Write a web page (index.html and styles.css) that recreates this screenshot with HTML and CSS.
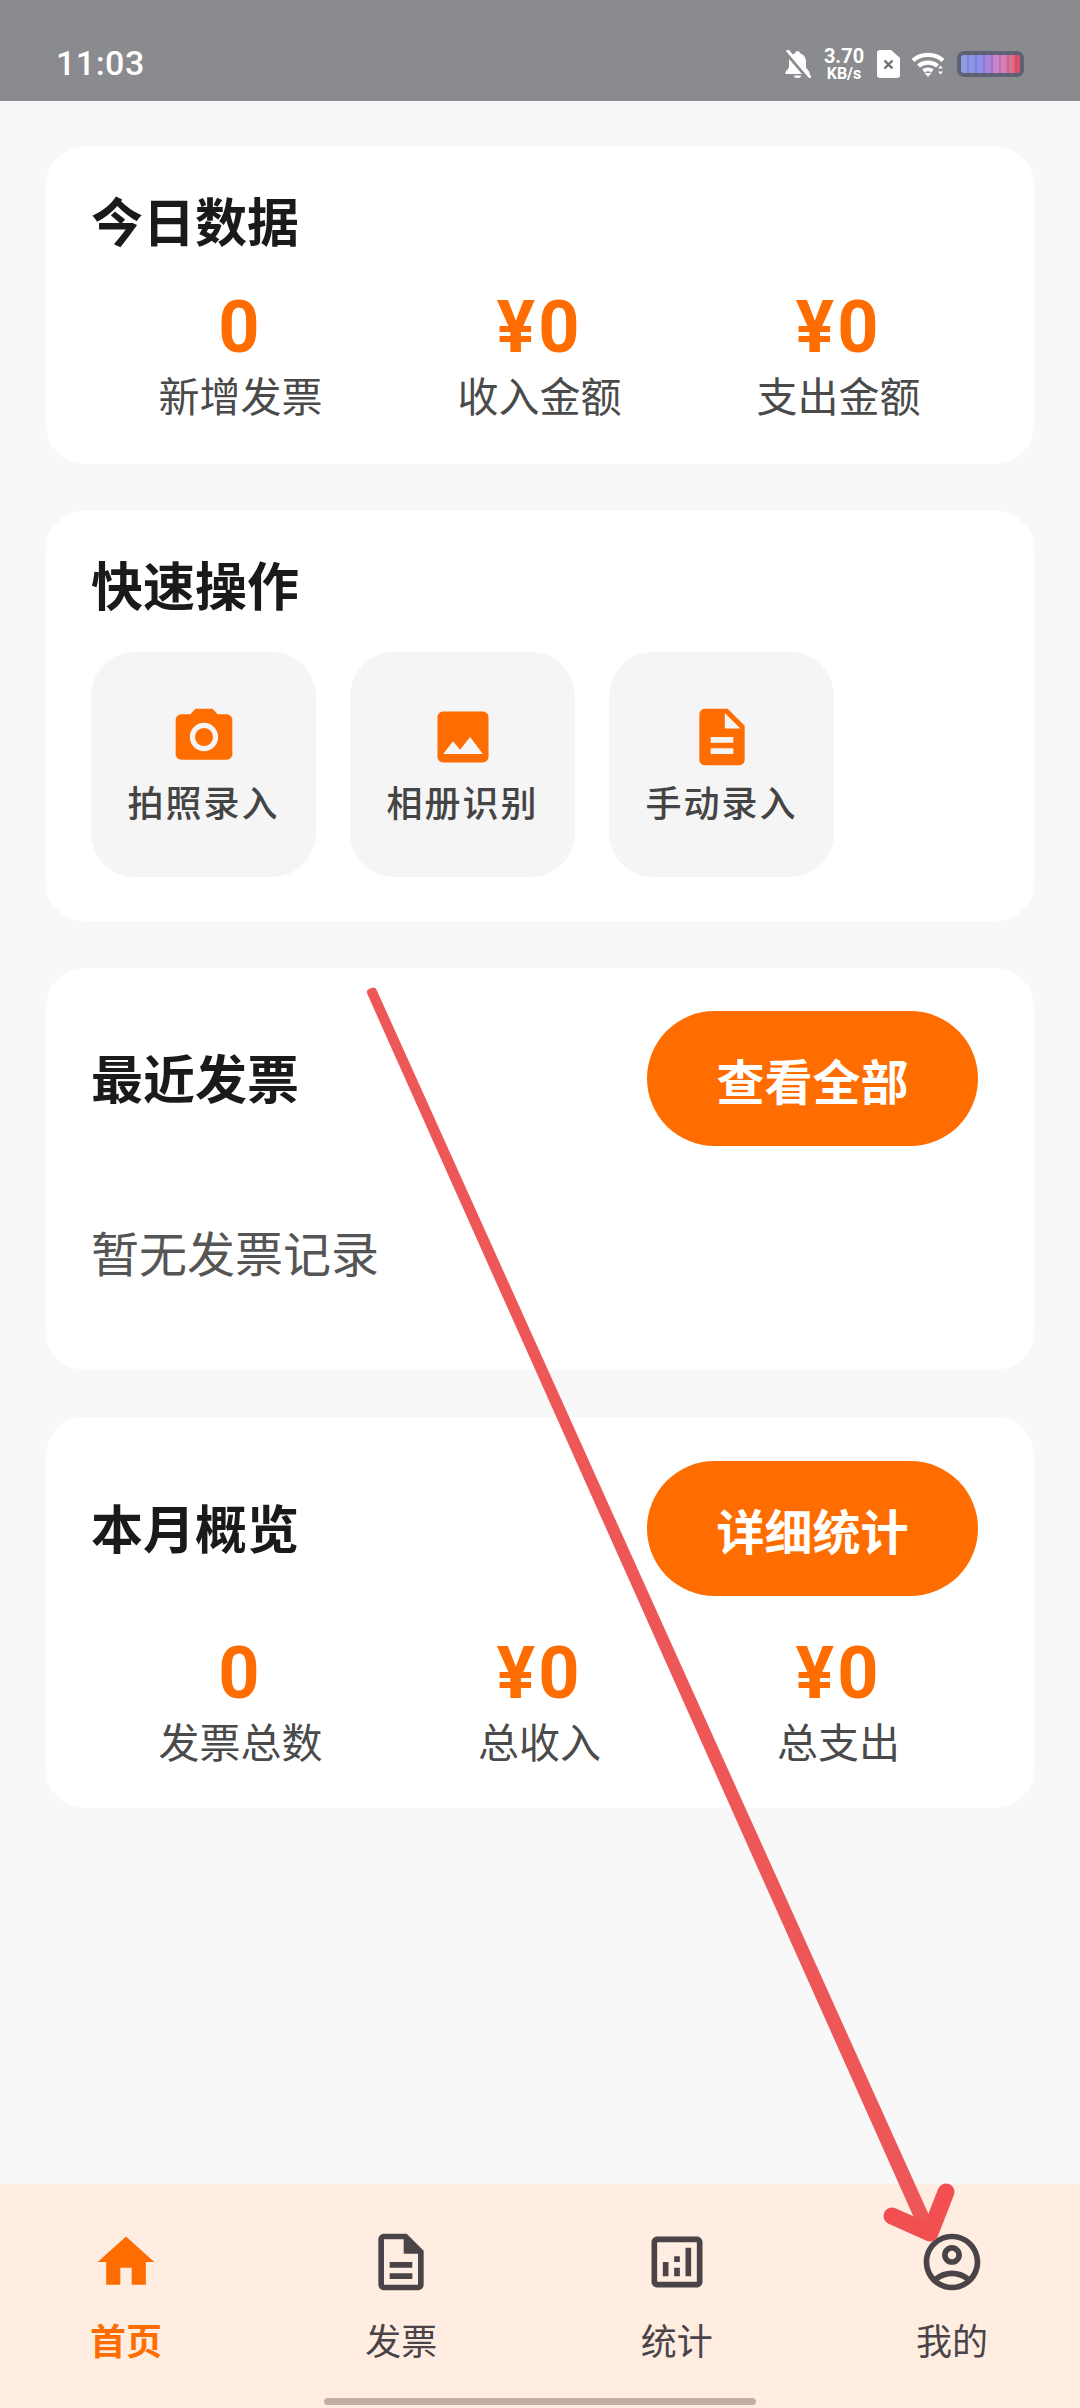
FILE: index.html
```html
<!DOCTYPE html>
<html lang="zh-CN">

<head>
    <meta charset="UTF-8">
    <meta name="viewport" content="width=device-width, initial-scale=1.0">
    <title>发票管理</title>
    <link rel="stylesheet" href="styles.css">
</head>

<body>
    <!-- Status bar -->
    <div class="statusbar">
        <span class="clock">11:03</span>
        <div class="status-icons">
            <svg class="ic-bell" viewBox="0 0 27 28"><path d="M13.500 1c-1.400 0-2.400 1-2.500 2.300C7.400 4.300 5 7.600 5 11.500v6L1.500 22v2h24v-2L22 17.500v-6c0-3.900-2.400-7.200-6-8.200C15.900 2 14.900 1 13.500 1zM10 25.500a3.500 2.500 0 0 0 7 0z" fill="#fff"/><path d="M1 0l24 28" stroke="#8a8b8e" stroke-width="5.500"/><path d="M3 0l24 28" stroke="#fff" stroke-width="3"/></svg>
            <div class="speed"><span class="speed-num">3.70</span><span class="speed-unit">KB/s</span></div>
            <svg class="ic-sim" viewBox="0 0 23 28"><path d="M3 0h11l9 8v17a3 3 0 0 1-3 3H3a3 3 0 0 1-3-3V3a3 3 0 0 1 3-3z" fill="#fff"/><path d="M7.500 10.500l8 8m0-8l-8 8" stroke="#6f7074" stroke-width="2.400"/></svg>
            <svg class="ic-wifi" viewBox="0 0 35 26" fill="none" stroke="#fff" stroke-width="4.200"><path d="M2 9.500c8-7.500 22-7.500 30 0"/><path d="M7.500 15c5-4.500 14-4.500 19 0"/><path d="M12.500 20c2.500-2 6.500-2 9 0"/><path d="M13.500 22l3.500 4 3.500-4z" fill="#fff" stroke="none"/><path d="M27 17.500l2.500-3 2.500 3zM27 20.500l2.500 3 2.500-3z" fill="#fff" stroke="none"/></svg>
            <div class="battery"><div class="battery-fill"></div></div>
        </div>
    </div>

    <div class="content">
        <!-- 今日数据 -->
        <section class="card card-today">
            <h2 class="card-title">今日数据</h2>
            <div class="stats">
                <div class="stat"><div class="stat-value">0</div><div class="stat-label">新增发票</div></div>
                <div class="stat"><div class="stat-value">¥0</div><div class="stat-label">收入金额</div></div>
                <div class="stat"><div class="stat-value">¥0</div><div class="stat-label">支出金额</div></div>
            </div>
        </section>

        <!-- 快速操作 -->
        <section class="card card-quick">
            <h2 class="card-title">快速操作</h2>
            <div class="tiles">
                <div class="tile">
                    <svg class="tile-icon" viewBox="0 0 24 24"><circle cx="12" cy="12" r="3.200"/><path d="M9 2L7.170 4H4c-1.100 0-2 .9-2 2v12c0 1.100.9 2 2 2h16c1.100 0 2-.9 2-2V6c0-1.100-.9-2-2-2h-3.170L15 2H9zm3 15c-2.760 0-5-2.240-5-5s2.240-5 5-5 5 2.240 5 5-2.240 5-5 5z"/></svg>
                    <span class="tile-label">拍照录入</span>
                </div>
                <div class="tile">
                    <svg class="tile-icon" viewBox="0 0 24 24"><path d="M21 19V5c0-1.100-.9-2-2-2H5c-1.100 0-2 .9-2 2v14c0 1.100.9 2 2 2h14c1.100 0 2-.9 2-2zM8.500 13.500l2.500 3.010L14.500 12l4.500 6H5l3.500-4.500z"/></svg>
                    <span class="tile-label">相册识别</span>
                </div>
                <div class="tile">
                    <svg class="tile-icon" viewBox="0 0 24 24"><path d="M14 2H6c-1.100 0-1.990.9-1.990 2L4 20c0 1.100.89 2 1.990 2H18c1.100 0 2-.9 2-2V8l-6-6zm2 16H8v-2h8v2zm0-4H8v-2h8v2zm-3-5V3.500L18.500 9H13z"/></svg>
                    <span class="tile-label">手动录入</span>
                </div>
            </div>
        </section>

        <!-- 最近发票 -->
        <section class="card card-recent">
            <div class="card-head">
                <h2 class="card-title">最近发票</h2>
                <button class="pill">查看全部</button>
            </div>
            <p class="empty">暂无发票记录</p>
        </section>

        <!-- 本月概览 -->
        <section class="card card-month">
            <div class="card-head">
                <h2 class="card-title">本月概览</h2>
                <button class="pill">详细统计</button>
            </div>
            <div class="stats">
                <div class="stat"><div class="stat-value">0</div><div class="stat-label">发票总数</div></div>
                <div class="stat"><div class="stat-value">¥0</div><div class="stat-label">总收入</div></div>
                <div class="stat"><div class="stat-value">¥0</div><div class="stat-label">总支出</div></div>
            </div>
        </section>
    </div>

    <!-- Bottom navigation -->
    <nav class="tabbar">
        <div class="tab active">
            <svg class="tab-icon" viewBox="0 0 24 24"><path d="M10 20v-6h4v6h5v-8h3L12 3 2 12h3v8z"/></svg>
            <span>首页</span>
        </div>
        <div class="tab">
            <svg class="tab-icon" viewBox="0 0 24 24"><path d="M8 16h8v2H8zm0-4h8v2H8zm6-10H6c-1.100 0-2 .9-2 2v16c0 1.100.89 2 1.990 2H18c1.100 0 2-.9 2-2V8l-6-6zm4 18H6V4h7v5h5v11z"/><path d="M13 3h1l5 5v1h-6z"/></svg>
            <span>发票</span>
        </div>
        <div class="tab">
            <svg class="tab-icon" viewBox="0 0 24 24"><path d="M19 3H5c-1.100 0-2 .9-2 2v14c0 1.100.9 2 2 2h14c1.100 0 2-.9 2-2V5c0-1.100-.9-2-2-2zm0 16H5V5h14v14zM7 12h2v5H7zm8-5h2v10h-2zm-4 7h2v3h-2zm0-4h2v2h-2z"/></svg>
            <span>统计</span>
        </div>
        <div class="tab">
            <svg class="tab-icon" viewBox="0 0 24 24"><path d="M12 2C6.480 2 2 6.480 2 12s4.480 10 10 10 10-4.480 10-10S17.520 2 12 2zM7.350 18.500C8.660 17.560 10.260 17 12 17s3.340.56 4.650 1.500c-1.310.94-2.910 1.500-4.650 1.500s-3.340-.56-4.650-1.500zm10.790-1.380C16.450 15.800 14.320 15 12 15s-4.450.8-6.140 2.120C4.700 15.730 4 13.950 4 12c0-4.420 3.580-8 8-8s8 3.580 8 8c0 1.950-.7 3.730-1.860 5.120z"/><path d="M12 6c-1.930 0-3.500 1.570-3.500 3.500S10.070 13 12 13s3.500-1.570 3.500-3.500S13.930 6 12 6zm0 5c-.83 0-1.500-.67-1.500-1.500S11.170 8 12 8s1.500.67 1.500 1.500S12.830 11 12 11z"/></svg>
            <span>我的</span>
        </div>
        <div class="home-indicator"></div>
    </nav>

    <!-- Red annotation arrow drawn over the screenshot -->
    <svg class="annotation" viewBox="0 0 1080 2408">
        <polygon class="arrow-line" points="373,991.600 371,992.400 923,2228 929,2225"/>
        <path class="arrow-head" d="M892 2216L930 2233L946 2192"/>
    </svg>
</body>

</html>
```

FILE: styles.css
```css
/* Page */
body {
    margin: 0;
    width: 1080px;
    height: 2408px;
    position: relative;
    overflow: hidden;
    display: flex;
    flex-direction: column;
    background-color: #f8f8f8;
    font-family: "Noto Sans CJK SC", "Noto Sans", sans-serif;
}

/* Status bar */
.statusbar {
    height: 101px;
    flex-shrink: 0;
    box-sizing: border-box;
    padding: 24px 56px 0 56px;
    display: flex;
    align-items: center;
    justify-content: space-between;
    background-color: #8a8b8e;
    color: #fff;
}

.clock {
    font-family: Roboto, sans-serif;
    font-size: 34px;
    font-weight: 500;
    letter-spacing: 0.5px;
}

.status-icons {
    display: flex;
    align-items: center;
    gap: 11px;
    margin-top: 3px;
}

.ic-bell {
    width: 27px;
    height: 28px;
}

.speed {
    display: flex;
    flex-direction: column;
    align-items: center;
    font-family: Roboto, sans-serif;
    font-weight: 700;
    width: 44px;
}

.speed-num {
    font-size: 20px;
    line-height: 20px;
}

.speed-unit {
    font-size: 16px;
    line-height: 16px;
}

.ic-sim {
    width: 23px;
    height: 28px;
}

.ic-wifi {
    width: 35px;
    height: 26px;
}

.battery {
    width: 67px;
    height: 26px;
    box-sizing: border-box;
    padding: 4px;
    border-radius: 7px;
    background-color: #5f6275;
}

.battery-fill {
    height: 100%;
    border-radius: 3px;
    background:
        repeating-linear-gradient(90deg, transparent 0 6px, rgba(90, 70, 110, 0.25) 6px 8px),
        linear-gradient(90deg, #8b9fe0 0%, #8c8fee 30%, #b283d8 50%, #d683c8 65%, #e0708e 85%, #e8475f 100%);
}

/* Cards */
.content {
    flex: 1;
    display: flex;
    flex-direction: column;
    gap: 47px;
    padding: 46px 46px 0 46px;
}

.card {
    box-sizing: border-box;
    padding: 0 46px 0 45px;
    background-color: #fff;
    border-radius: 38px;
}

.card-today {
    padding-top: 37px;
    padding-bottom: 43px;
}

.card-quick {
    padding-top: 37px;
    padding-bottom: 44px;
}

.card-recent {
    padding-top: 43px;
    padding-bottom: 83px;
}

.card-month {
    padding-top: 44px;
    padding-bottom: 41px;
}

.card-title {
    margin: 0;
    font-size: 52px;
    line-height: 72px;
    font-weight: 700;
    color: #1a1a1a;
}

.card-head {
    display: flex;
    align-items: center;
    justify-content: space-between;
    padding-right: 10px;
}

.card-head .card-title {
    margin-top: -3px;
}

.pill {
    width: 331px;
    height: 135px;
    padding: 0;
    border: none;
    border-radius: 68px;
    background-color: #ff6d00;
    color: #fff;
    font-family: inherit;
    font-size: 48px;
    font-weight: 700;
}

/* Stats */
.stats {
    display: grid;
    grid-template-columns: repeat(3, 1fr);
    margin-top: 27px;
    text-align: center;
}

.card-month .stats {
    margin-top: 33px;
}

.stat-value {
    padding-top: 6px;
    font-family: Roboto, sans-serif;
    font-size: 72px;
    line-height: 78px;
    font-weight: 700;
    letter-spacing: 3px;
    color: #ff6d00;
}

.stat-label {
    font-size: 41px;
    line-height: 54px;
    color: #4a4a4a;
}

/* Quick actions */
.tiles {
    display: flex;
    gap: 34px;
    margin-top: 32px;
}

.tile {
    width: 225px;
    height: 225px;
    display: flex;
    flex-direction: column;
    align-items: center;
    justify-content: center;
    background-color: #f5f5f6;
    border-radius: 44px;
}

.tile-icon {
    width: 68px;
    height: 68px;
    fill: #ff6d00;
}

.tile-label {
    margin-top: 5px;
    font-size: 36px;
    line-height: 50px;
    font-weight: 500;
    letter-spacing: 2px;
    color: #444;
}

.empty {
    margin: 69px 0 0 0;
    font-size: 48px;
    line-height: 72px;
    color: #555;
}

/* Bottom navigation */
.tabbar {
    height: 224px;
    flex-shrink: 0;
    box-sizing: border-box;
    position: relative;
    padding: 44px 56px 0 54px;
    display: flex;
    justify-content: space-between;
    align-items: flex-start;
    background-color: #ffede2;
}

.tab {
    width: 144px;
    display: flex;
    flex-direction: column;
    align-items: center;
    color: #4a4448;
    font-size: 36px;
    line-height: 50px;
}

.tab-icon {
    width: 68px;
    height: 68px;
    margin-bottom: 18px;
    fill: #4a4448;
}

.tab.active {
    color: #ff6d00;
    font-weight: 700;
}

.tab.active .tab-icon {
    fill: #ff6d00;
}

.home-indicator {
    position: absolute;
    left: 324px;
    bottom: 3px;
    width: 432px;
    height: 7px;
    border-radius: 4px;
    background-color: #c4b0a3;
}

/* Annotation overlay */
.annotation {
    position: absolute;
    left: 0;
    top: 0;
    width: 1080px;
    height: 2408px;
    pointer-events: none;
}

.arrow-line {
    fill: #ee5757;
    stroke: #ee5757;
    stroke-width: 8;
    stroke-linejoin: round;
}

.arrow-head {
    fill: none;
    stroke: #f25050;
    stroke-width: 17;
    stroke-linecap: round;
    stroke-linejoin: round;
}
```
